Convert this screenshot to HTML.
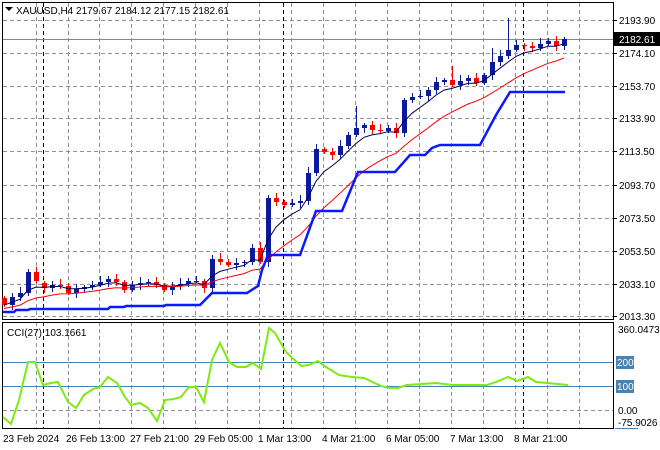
<!DOCTYPE html>
<html><head><meta charset="utf-8"><style>
html,body{margin:0;padding:0;background:#fff;}
svg{display:block;font-family:"Liberation Sans",Tahoma,sans-serif;}
</style></head><body>
<svg id="s" width="660" height="450" viewBox="0 0 660 450" xmlns="http://www.w3.org/2000/svg">
<rect width="660" height="450" fill="#fff"/>
<g id="grid" stroke="#8a94a0" stroke-width="1" stroke-dasharray="4,3" fill="none"></g>
<g id="cand"></g>
<g id="lines" fill="none"></g>
<g font-size="10" fill="#000">
<text x="16" y="14">XAUUSD,H4  2179.67 2184.12 2177.15 2182.61</text>
<path d="M5 7h8l-4 4z" fill="#000"/>
<text x="7" y="336">CCI(27) 103.1661</text>
<g id="lab"></g>
<text x="3" y="442">23 Feb 2024</text>
<text x="66" y="442">26 Feb 13:00</text>
<text x="130" y="442">27 Feb 21:00</text>
<text x="194" y="442">29 Feb 05:00</text>
<text x="258" y="442">1 Mar 13:00</text>
<text x="322" y="442">4 Mar 21:00</text>
<text x="386" y="442">6 Mar 05:00</text>
<text x="450" y="442">7 Mar 13:00</text>
<text x="514" y="442">8 Mar 21:00</text>
</g>
</svg>
<script>
(function(){
var NS="http://www.w3.org/2000/svg";
function el(p,t,a,txt){var e=document.createElementNS(NS,t);for(var k in a)e.setAttribute(k,a[k]);if(txt!==undefined)e.textContent=txt;document.getElementById(p).appendChild(e);return e;}
var vx=[36,68,99,131,163,195,227,259,291,323,355,387,419,451,483,515,547,579];
vx.forEach(function(x){el('grid','line',{x1:x+.5,y1:3,x2:x+.5,y2:319});el('grid','line',{x1:x+.5,y1:322,x2:x+.5,y2:428});});
var hy=[20,53,86,118,151,185,218,251,284,316];
hy.forEach(function(y){el('grid','line',{x1:3,y1:y+.5,x2:613,y2:y+.5});});
el('grid','line',{x1:3,y1:410.5,x2:613,y2:410.5});
[43,283,523].forEach(function(x){el('grid','line',{x1:x+.5,y1:3,x2:x+.5,y2:319,stroke:'#000'});el('grid','line',{x1:x+.5,y1:322,x2:x+.5,y2:428,stroke:'#000'});});
el('grid','line',{x1:3,y1:39.5,x2:613,y2:39.5,stroke:'#7d8a96','stroke-dasharray':'none'});
el('grid','line',{x1:3,y1:362.5,x2:613,y2:362.5,stroke:'#4682b4','stroke-dasharray':'none'});
el('grid','line',{x1:3,y1:386.5,x2:613,y2:386.5,stroke:'#4682b4','stroke-dasharray':'none'});
el('grid','rect',{x:2.5,y:2.5,width:611,height:317,stroke:'#000','stroke-dasharray':'none'});
el('grid','rect',{x:2.5,y:322.5,width:611,height:106,stroke:'#000','stroke-dasharray':'none'});
var c=[305,297,293,272,281,288,285,286,293,289,287,285,282,279,282,290,285,283,282,285,290,286,284,281,281,288,259,262,265,263,262,248,262,198,202,205,203,201,173,149,152,155,146,135,128,125,130,131,128,133,100,97,96,90,82,80,85,81,78,83,75,62,56,50,45,46,48,44,41,46,39];
for(var i=0;i<c.length;i++){
 var x=4+8*i,o=(i==0?298:c[i-1]),cl=c[i];
 if(i==5)o=283;
 var ty=Math.min(o,cl),by=Math.max(o,cl);
 var w1=2+((i*7)%5),w2=2+((i*3)%4);
 if(i==63)w1=32; if(i==61)w1=14; if(i==56)w1=14; if(i==44)w1=22; if(i==38)w1=6;
 var col=cl<=o?'#0b1a9c':'#ff0000';
 el('cand','line',{x1:x+.5,y1:ty-w1,x2:x+.5,y2:by+w2,stroke:col});
 el('cand','rect',{x:x-2,y:ty,width:5,height:Math.max(1,by-ty),fill:col});
}
function ema(n,col,w){var k=2/(n+1),v=c[0]+(n>6?4:0),pts=[];for(var i=0;i<c.length;i++){v=v+k*(c[i]-v);pts.push((4+8*i)+','+v.toFixed(1));}
 el('lines','polyline',{points:pts.join(' '),stroke:col,'stroke-width':w});}
ema(5,'#000050',1);ema(14,'#ff0000',1);
el('lines','polyline',{points:'3,312 14,312 16,310 28,310 30,309 108,309 110,307 124,307 126,306 164,306 166,305 200,305 212,293 247,293 258,286 262,270 268,255 300,255 316,211 342,211 358,172 395,172 410,155 425,155 432,148 440,145 480,145 488,130 496,115 510,92 565,92',stroke:'#0a1aff','stroke-width':2.5});
el('lines','polyline',{points:'3,417 11,424 19,400 28,362 35,362 43,385 51,383 58,382 68,402 76,408 84,395 93,389 100,387 108,377 117,383 125,397 131,405 140,403 148,408 157,421 165,400 174,399 181,397 189,387 196,387 204,402 212,360 220,343 229,362 237,367 246,367 253,363 261,369 269,328 275,333 286,352 301,366 309,365 318,361 326,367 339,375 352,377 364,378 381,386 390,388 398,388 407,385 436,383 453,385 487,385 496,382 508,377 517,381 528,377 536,382 547,383 568,385',stroke:'#7fea10','stroke-width':2});
var L=[[20,'2193.90'],[53,'2174.10'],[86,'2153.70'],[118,'2133.90'],[151,'2113.50'],[185,'2093.70'],[218,'2073.50'],[251,'2053.50'],[284,'2033.10'],[316,'2013.30']];
L.forEach(function(a){el('lab','line',{x1:613,y1:a[0]+.5,x2:617,y2:a[0]+.5,stroke:'#000'});el('lab','text',{x:619,y:a[0]+4},a[1]);});
el('lab','rect',{x:614,y:32,width:46,height:14,fill:'#000'});
el('lab','text',{x:619,y:43,fill:'#fff'},'2182.61');
el('lab','text',{x:618,y:333},'360.0473');
el('lab','rect',{x:616,y:356,width:18,height:13,fill:'#4682b4'});
el('lab','text',{x:617,y:366,fill:'#fff'},'200');
el('lab','rect',{x:616,y:380,width:18,height:13,fill:'#4682b4'});
el('lab','text',{x:617,y:390,fill:'#fff'},'100');
el('lab','text',{x:618,y:414},'0.00');
el('lab','text',{x:618,y:426},'-75.9026');
el('lab','line',{x1:615,y1:428.5,x2:638,y2:428.5,stroke:'#4682b4'});
})();
</script>
</body></html>
